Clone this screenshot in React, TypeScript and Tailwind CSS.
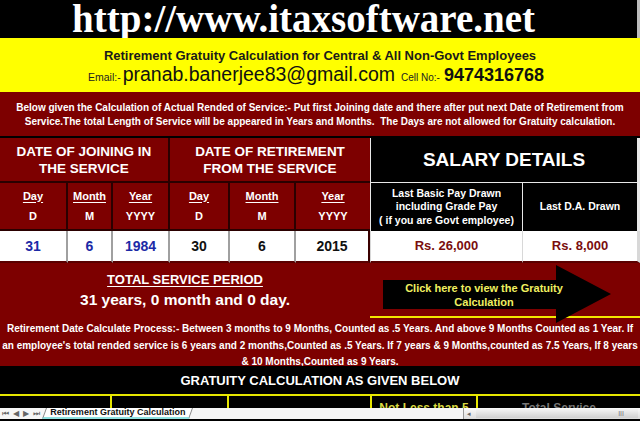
const cols = "grid-cols-[68px_45px_57px_60px_66px_74px_153px_117px]"

const SubHead = ({ title, code, last }: { title: string; code: string; last?: boolean }) => (
  <div className={`flex flex-col items-center justify-center gap-[9px] bg-[#7d0000] border-b-2 border-[#2a0000] ${last ? "" : "border-r-2"} text-white font-bold text-[11px] leading-none`}>
    <span className="underline underline-offset-2">{title}</span>
    <span>{code}</span>
  </div>
)

const DataCell = ({ value, blue, last }: { value: string; blue?: boolean; last?: boolean }) => (
  <div className={`flex items-center justify-center bg-white border-b-2 border-[#5a0000] ${last ? "border-r-2 border-r-[#3a0000]" : "border-r-2 border-r-[#a0a0a0]"} font-bold text-[14px] ${blue ? "text-[#1c2aa6]" : "text-[#111]"}`}>
    {value}
  </div>
)

export default function App() {
  return (
    <div className="w-[640px] h-[421px] overflow-hidden bg-black flex flex-col font-['Liberation_Sans',Arial,sans-serif]">
      {/* site banner */}
      <div className="h-[38px] shrink-0 bg-black flex items-center justify-center pr-[30px] border-r-[3px] border-[#bdbdbd]">
        <span className="font-['Liberation_Serif','Times_New_Roman',serif] font-bold text-white text-[39px] leading-[38px]">
          http://www.itaxsoftware.net
        </span>
      </div>

      {/* yellow title */}
      <div className="h-[54px] shrink-0 bg-[#ffff00] flex flex-col items-center justify-center pt-[4px] text-black">
        <div className="font-bold text-[13px] leading-none text-[#1a1a1a]">
          Retirement Gratuity Calculation for Central &amp; All Non-Govt Employees
        </div>
        <div className="flex items-baseline mt-[3px] leading-none pr-[8px]">
          <span className="text-[10.5px] text-[#222]">Email:-</span>
          <span className="text-[19.5px] ml-[2px] text-[#111]">pranab.banerjee83@gmail.com</span>
          <span className="text-[10px] ml-[6px] text-[#222]">Cell No:-</span>
          <span className="text-[18px] font-bold ml-[4px] text-[#111]">9474316768</span>
        </div>
      </div>

      {/* intro */}
      <div className="h-[46px] shrink-0 bg-[#7d0000] flex items-center justify-center text-center px-1 pt-[1px] border-b-2 border-black">
        <p className="text-white font-bold text-[10px] leading-[14px]">
          Below given the Calculation of Actual Rended of Service:- Put first Joining date and there after put next Date of Retirement from Service.The total Length of Service will be appeared in Years and Months.&nbsp; The Days are not allowed for Gratuity calculation.
        </p>
      </div>

      {/* date + salary table */}
      <div className={`grid ${cols} grid-rows-[45px_48px_32px] shrink-0`}>
        <div className="col-span-3 flex items-center justify-center text-center bg-[#7d0000] border-r-2 border-b-2 border-[#2a0000] text-white font-bold text-[13.5px] leading-[17px]">
          DATE OF JOINING IN<br />THE SERVICE
        </div>
        <div className="col-span-3 flex items-center justify-center text-center bg-[#7d0000] border-b-2 border-[#2a0000] text-white font-bold text-[13.5px] leading-[17px]">
          DATE OF RETIREMENT<br />FROM THE SERVICE
        </div>
        <div className="col-span-2 flex items-center justify-center bg-black border-l border-r-[3px] border-b border-[#e8e8e8] text-white font-bold text-[19px]">
          SALARY DETAILS
        </div>

        <SubHead title="Day" code="D" />
        <SubHead title="Month" code="M" />
        <SubHead title="Year" code="YYYY" />
        <SubHead title="Day" code="D" />
        <SubHead title="Month" code="M" />
        <SubHead title="Year" code="YYYY" last />
        <div className="flex items-center justify-center text-center bg-black border-l border-r border-[#e8e8e8] text-white font-bold text-[10.5px] leading-[13.5px]">
          Last Basic Pay Drawn<br />including Grade Pay<br />( if you are Govt employee)
        </div>
        <div className="flex items-center justify-center bg-black border-r-[3px] border-[#e8e8e8] text-white font-bold text-[10.5px]">
          Last D.A. Drawn
        </div>

        <DataCell value="31" blue />
        <DataCell value="6" blue />
        <DataCell value="1984" blue />
        <DataCell value="30" />
        <DataCell value="6" />
        <DataCell value="2015" last />
        <div className="flex items-center justify-center bg-white border-l border-r border-b-2 border-[#d8d8d8] border-b-[#5a0000] font-bold text-[13px] text-[#7a0e0e]">
          Rs. 26,000
        </div>
        <div className="flex items-center justify-center bg-white border-r-[3px] border-b-2 border-[#d8d8d8] border-b-[#5a0000] font-bold text-[13px] text-[#7a0e0e]">
          Rs. 8,000
        </div>
      </div>

      {/* total service period */}
      <div className="relative h-[55px] shrink-0 bg-[#7d0000] flex">
        <div className="w-[370px] flex flex-col items-center justify-center gap-[6px] text-white font-bold leading-none">
          <span className="text-[13px] underline underline-offset-2">TOTAL SERVICE PERIOD</span>
          <span className="text-[15.5px]">31 years, 0 month and 0 day.</span>
        </div>
        <div className="flex-1 border-b-2 border-[#f2e600]" />
        <svg className="absolute left-0 top-0 overflow-visible" width="640" height="55" viewBox="0 0 640 55">
          <polygon points="383,17 556,17 556,2 611,31 556,60 556,46 383,46" fill="#000" />
        </svg>
        <div className="absolute left-[393px] top-[18px] w-[182px] text-center text-[#f0f060] font-bold text-[11px] leading-[14px]">
          Click here to view the Gratuity<br />Calculation
        </div>
      </div>

      {/* rules */}
      <div className="h-[48px] shrink-0 bg-[#7d0000] flex items-start justify-center text-center px-[2px] pt-[3px]">
        <p className="text-white font-bold text-[10px] leading-[16.5px]">
          Retirement Date Calculate Process:- Between 3 months to 9 Months, Counted as .5 Years. And above 9 Months Counted as 1 Year. If an employee's total rended service is 6 years and 2 months,Counted as .5 Years. If 7 years &amp; 9 Months,counted as 7.5 Years, If 8 years &amp; 10 Months,Counted as 9 Years.
        </p>
      </div>

      {/* gratuity heading */}
      <div className="h-[28px] shrink-0 bg-black flex items-center justify-center pt-[2px] text-white font-bold text-[13px]">
        GRATUITY CALCULATION AS GIVEN BELOW
      </div>

      {/* next table peeking */}
      <div className="h-[14px] shrink-0 bg-black border-t-2 border-[#e6e600] grid grid-cols-[112px_117px_143px_106px_162px] overflow-hidden">
        <div className="border-r-2 border-[#e6e600]" />
        <div className="border-r-2 border-[#e6e600]" />
        <div className="border-r-2 border-[#e6e600]" />
        <div className="border-r-2 border-[#e6e600] overflow-hidden whitespace-nowrap text-center pt-[6px] text-[#d8d840] font-bold text-[12px] leading-none">Not Less than 5</div>
        <div className="overflow-hidden whitespace-nowrap text-center pt-[6px] text-[#777] font-bold text-[12px] leading-none">Total Service</div>
      </div>

      {/* sheet tabs */}
      <div className="h-[11px] shrink-0 bg-[#f6f6f6] flex items-center text-[8px] leading-none text-[#666]">
        <div className="flex items-center gap-[4px] pl-[2px] w-[44px]">
          <span>⏮</span><span>◀</span><span>▶</span><span>⏭</span>
        </div>
        <div className="h-[11px] flex items-center px-[5px] bg-white border-b-2 border-[#8fe0e0] skew-x-[-20deg] border-l border-r border-l-[#888] border-r-[#888]">
          <span className="skew-x-[20deg] font-bold text-[9px] text-[#111]">Retirement Gratuity Calculation</span>
        </div>
        <div className="flex-1" />
        <div className="w-[177px] h-[11px] flex items-center border-l border-[#999] bg-gradient-to-b from-[#fafafa] to-[#dcdcdc]">
          <span className="px-[3px] text-[7px]">◂</span>
          <div className="flex-1 h-[9px] mx-[2px] bg-gradient-to-b from-[#f4f4f4] to-[#d0d0d0] flex items-center justify-end pr-[14px]">
            <span className="text-[7px] text-[#777]">III</span>
          </div>
        </div>
      </div>
    </div>
  )
}
